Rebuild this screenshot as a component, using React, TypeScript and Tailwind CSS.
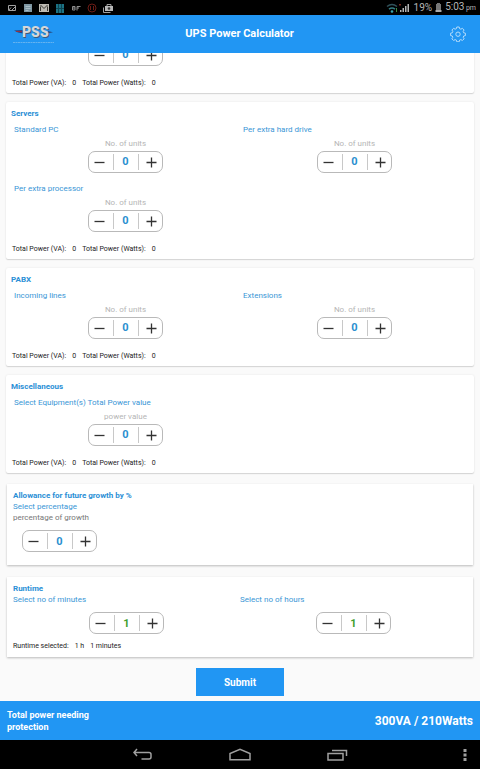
import { useState } from 'react';
import { clsx } from 'clsx';

type StepperProps = {
  id: string;
  name: string;
  initial?: number;
  green?: boolean;
};

function Stepper({ id, name, initial = 0, green = false }: StepperProps) {
  const [value, setValue] = useState(initial);

  return (
    <div className="flex h-[22px] w-[75px] items-center rounded-[7px] border border-[#b9b9b9] bg-white">
      <button
        type="button"
        aria-label={`Decrease ${name}`}
        onClick={() => setValue(Math.max(0, value - 1))}
        className="flex h-full flex-1 items-center justify-center pr-0.5 text-[#333]"
      >
        <svg width="11" height="11" viewBox="0 0 11 11" stroke="currentColor" strokeWidth="1.3">
          <path d="M0.5 5.5h10" />
        </svg>
      </button>
      <input
        id={id}
        aria-label={name}
        inputMode="numeric"
        value={value}
        onChange={(e) => setValue(Number(e.target.value) || 0)}
        className={clsx(
          'h-4 w-[26px] border-x border-[#c8c8c8] pt-px text-center text-[11px] font-bold outline-none',
          green ? 'text-[#3f9f2f]' : 'text-[#2b8fd0]'
        )}
      />
      <button
        type="button"
        aria-label={`Increase ${name}`}
        onClick={() => setValue(value + 1)}
        className="flex h-full flex-1 items-center justify-center pl-0.5 text-[#333]"
      >
        <svg width="11" height="11" viewBox="0 0 11 11" stroke="currentColor" strokeWidth="1.3">
          <path d="M0.5 5.5h10M5.5 0.5v10" />
        </svg>
      </button>
    </div>
  );
}

type Field = { id: string; label: string; hint: string };

const servers: Field[] = [
  { id: 'standard-pc', label: 'Standard PC', hint: 'No. of units' },
  { id: 'hard-drive', label: 'Per extra hard drive', hint: 'No. of units' },
  { id: 'processor', label: 'Per extra processor', hint: 'No. of units' },
];

const pabx: Field[] = [
  { id: 'incoming', label: 'Incoming lines', hint: 'No. of units' },
  { id: 'extensions', label: 'Extensions', hint: 'No. of units' },
];

const misc: Field[] = [
  { id: 'equipment', label: 'Select Equipment(s) Total Power value', hint: 'power value' },
];

function Totals() {
  return (
    <p className="mt-[11px] flex gap-1.5 pl-px text-[7px] leading-3 text-[#222]">
      <span>Total Power (VA):</span>
      <span>0</span>
      <span>Total Power (Watts):</span>
      <span>0</span>
    </p>
  );
}

function PowerCard({ title, fields }: { title: string; fields: Field[] }) {
  return (
    <section className="mx-1.5 mb-[9px] shrink-0 rounded-xs bg-white px-[5px] pt-1.5 pb-1 shadow-[0_1px_1px_#d4d4d4,0_0_2px_#e4e4e4]">
      <h2 className="text-[8px] leading-3 font-bold text-[#2b8fd6]">{title}</h2>
      <div className="mt-1 grid grid-cols-2 gap-y-2.5">
        {fields.map((field) => (
          <div key={field.id} className="flex flex-col items-center">
            <label
              htmlFor={field.id}
              className="self-stretch pl-[3px] text-[8px] leading-3 whitespace-nowrap text-[#3a96d6]"
            >
              {field.label}
            </label>
            <p className="mt-0.5 mb-px text-[8px] leading-3 text-[#b5b5b5]">{field.hint}</p>
            <Stepper id={field.id} name={field.label} />
          </div>
        ))}
      </div>
      <Totals />
    </section>
  );
}

function StatusBar() {
  return (
    <div className="flex h-[15px] shrink-0 items-center justify-between bg-black pr-1 pl-[7px] text-[#b5b5b5]">
      <div className="flex items-center gap-[6px]">
        <svg width="10" height="10" viewBox="0 0 10 10" fill="none" stroke="#a0a0a0">
          <path d="M1.5 2.5h7v5h-7zM2 7l2-2.500M5 7l3-3" />
        </svg>
        <svg width="10" height="10" viewBox="0 0 10 10">
          <path d="M1 1h8v8H1z" fill="#7f97a3" />
          <path d="M2.500 3.500h5M2.500 5.500h5M2.500 7.500h3" stroke="#a9bcc4" />
        </svg>
        <svg width="10" height="10" viewBox="0 0 10 10">
          <path d="M0 1h10v8H0z" fill="#bdbab2" />
          <path d="M1.500 2l3.500 3.500L8.500 2M1.500 8V3.500M8.500 8V3.500" fill="none" stroke="#3b3934" />
        </svg>
        <svg width="10" height="10" viewBox="0 0 10 10">
          <path d="M1 1h8v9H1z" fill="#1c7284" />
          <path d="M3.500 1v9M6.500 1v9M1 5.500h8" stroke="#0e4652" />
        </svg>
        <svg width="10" height="10" viewBox="0 0 10 10" fill="none" stroke="#8f8f8f">
          <path d="M1.500 3.500h2.500v3.500H1.500zM1.500 5h2.500M6 7.500V3.500h3.500M6 5h2" />
        </svg>
        <svg width="10" height="10" viewBox="0 0 10 10" fill="none" stroke="#6d1c16">
          <circle cx="5" cy="5" r="4" />
          <path d="M3.500 3v4M6.500 3v4" />
        </svg>
        <svg width="10" height="10" viewBox="0 0 10 10">
          <path d="M2 3h8v5H2z" fill="#b8b8b8" />
          <path d="M4 3V1.500h4V3M0.500 4.500v5h7" fill="none" stroke="#a0a0a0" />
          <circle cx="6" cy="5.500" r="1.300" fill="#333" />
        </svg>
      </div>
      <div className="flex items-center">
        <svg width="13" height="10" viewBox="0 0 13 10" fill="none">
          <path d="M1 3.500q5-4 10 0" stroke="#31515a" strokeWidth="1.500" />
          <path d="M3 6.200q3-2.500 6 0" stroke="#347e83" strokeWidth="1.500" />
          <circle cx="6" cy="8.500" r="1.300" fill="#39a5b0" />
          <path d="M10.500 5v4" stroke="#3d8a3c" />
        </svg>
        <svg width="11" height="10" viewBox="0 0 11 10" fill="#b5b5b5">
          <path d="M1 7h1.500v2H1zM3.500 5H5v4H3.500zM6 3h1.500v6H6zM8.500 1H10v8H8.500z" />
          <path d="M0 1h2v1.500H0z" fill="#7a2d22" />
        </svg>
        <span className="ml-1 text-[10px] leading-3">19%</span>
        <svg className="mx-[3px]" width="7" height="10" viewBox="0 0 7 10">
          <path d="M2 0h3v1h1v7H1V1h1z" fill="#777" />
          <path d="M0.500 7h6v2h-6z" fill="#aaa" />
        </svg>
        <span className="text-[10px] leading-3">
          5:03 <span className="-ml-px text-[7px]">pm</span>
        </span>
      </div>
    </div>
  );
}

function Logo() {
  return (
    <svg width="42" height="22" viewBox="0 0 42 22" role="img" aria-label="PSS">
      <path d="M1 7.500l9-.5v3.500L5 9.500z" fill="#28447e" />
      <path d="M3 8.500h6" stroke="#8e3347" />
      <path d="M35 8l5 1.200-5 1.300z" fill="#274f86" />
      <text x="10" y="14.500" fontFamily="Roboto, sans-serif" fontSize="14" fontWeight="900" fill="#3c5c7c">
        PSS
      </text>
      <text x="9" y="13.500" fontFamily="Roboto, sans-serif" fontSize="14" fontWeight="900" fill="#d3d7da">
        PSS
      </text>
      <path d="M0 19.500h41" stroke="#8fc4ee" strokeDasharray="2 0.500" strokeOpacity="0.600" />
    </svg>
  );
}

function Header() {
  return (
    <header className="grid h-[38px] shrink-0 grid-cols-[1fr_auto_1fr] items-center bg-[#2196f3] pr-3.5 pl-[13px]">
      <Logo />
      <h1 className="text-[11px] font-bold text-white">UPS Power Calculator</h1>
      <button type="button" aria-label="Settings" className="justify-self-end text-[#b4dcfb]">
        <svg width="16" height="16" viewBox="0 0 16 16" fill="none" stroke="currentColor" strokeLinejoin="round">
          <path d="M6.800 1h2.400l.4 1.700 1.300.5 1.500-.9 1.700 1.700-.9 1.500.5 1.300 1.700.4v2.400l-1.700.4-.5 1.300.9 1.500-1.700 1.700-1.500-.9-1.300.5-.4 1.700H6.800l-.4-1.700-1.300-.5-1.500.9-1.700-1.700.9-1.500-.5-1.300L.6 9.600V7.200l1.700-.4.5-1.300-.9-1.500 1.700-1.700 1.500.9 1.300-.5z" />
          <circle cx="8" cy="8.200" r="2.200" />
        </svg>
      </button>
    </header>
  );
}

function NavBar() {
  return (
    <nav className="relative flex h-[29px] shrink-0 items-center justify-center gap-[76px] bg-black text-[#a0a0a0]">
      <button type="button" aria-label="Back">
        <svg width="21" height="13" viewBox="0 0 21 13" fill="none" stroke="currentColor" strokeWidth="1.500">
          <path d="M5 1L2 4.500 5 8M2 4.500h15q2 0 2 2v2.500q0 2-2 2H9.500" />
        </svg>
      </button>
      <button type="button" aria-label="Home">
        <svg width="22" height="13" viewBox="0 0 22 13" fill="none" stroke="currentColor" strokeWidth="1.500">
          <path d="M1 11.800V5.500L11 1.300l10 4.200v6.300z" />
        </svg>
      </button>
      <button type="button" aria-label="Recent apps">
        <svg width="21" height="12" viewBox="0 0 21 12" fill="none" stroke="currentColor" strokeWidth="1.500">
          <path d="M1 4.500h15V11H1zM5 1.500h14.500V7" />
        </svg>
      </button>
      <button type="button" aria-label="More" className="absolute top-2 right-3">
        <svg width="6" height="14" viewBox="0 0 6 14" fill="currentColor">
          <path d="M1.500 1h3v3h-3zM1.500 5.500h3v3h-3zM1.500 10h3v3h-3z" />
        </svg>
      </button>
    </nav>
  );
}

export default function App() {
  return (
    <div className="flex h-screen flex-col bg-[#fafafa] font-['Roboto',sans-serif]">
      <StatusBar />
      <Header />

      {/* reversed column keeps the list scrolled to its end */}
      <main className="flex min-h-0 flex-1 flex-col-reverse overflow-y-auto [scrollbar-width:none]">
        <form className="flex flex-col" onSubmit={(e) => e.preventDefault()}>
          <section className="mx-1.5 mb-[9px] rounded-xs bg-white px-[5px] pt-1.5 pb-1 shadow-[0_1px_1px_#d4d4d4,0_0_2px_#e4e4e4]">
            <div className="grid grid-cols-2 justify-items-center">
              <Stepper id="devices" name="Units" />
            </div>
            <Totals />
          </section>

          <PowerCard title="Servers" fields={servers} />
          <PowerCard title="PABX" fields={pabx} />
          <PowerCard title="Miscellaneous" fields={misc} />

          <section className="mx-[7px] mt-0.5 mb-3 bg-white px-1.5 pt-1.5 pb-[13px] text-[8px] leading-[11px] shadow-[0_1px_2px_#bbb]">
            <h2 className="font-bold text-[#2b8fd6]">Allowance for future growth by %</h2>
            <label htmlFor="growth" className="block text-[#3a96d6]">
              Select percentage
            </label>
            <p className="text-[#777]">percentage of growth</p>
            <div className="mt-[7px] pl-[9px]">
              <Stepper id="growth" name="Percentage of growth" />
            </div>
          </section>

          <section className="mx-[7px] bg-white px-1.5 pt-1.5 pb-[5px] text-[8px] leading-[11px] shadow-[0_1px_2px_#bbb]">
            <h2 className="font-bold text-[#2b8fd6]">Runtime</h2>
            <div className="grid grid-cols-2 justify-items-center gap-y-[7px]">
              <label htmlFor="minutes" className="justify-self-start text-[#3a96d6]">
                Select no of minutes
              </label>
              <label htmlFor="hours" className="justify-self-start text-[#3a96d6]">
                Select no of hours
              </label>
              <Stepper id="minutes" name="Minutes" initial={1} green />
              <Stepper id="hours" name="Hours" initial={1} green />
            </div>
            <p className="mt-1.5 flex gap-1.5 text-[7px] leading-3 text-[#222]">
              <span>Runtime selected:</span>
              <span>1 h</span>
              <span>1 minutes</span>
            </p>
          </section>

          <button
            type="submit"
            className="mt-[11px] mb-[5px] h-7 w-[88px] self-center bg-[#2196f3] text-[10px] font-bold text-white"
          >
            Submit
          </button>
        </form>
      </main>

      <footer className="flex h-[39px] shrink-0 items-center justify-between bg-[#2196f3] px-[7px] font-bold text-white">
        <p className="w-24 text-[9px] leading-3">Total power needing protection</p>
        <p className="text-[12px]">300VA / 210Watts</p>
      </footer>
      <NavBar />
    </div>
  );
}
